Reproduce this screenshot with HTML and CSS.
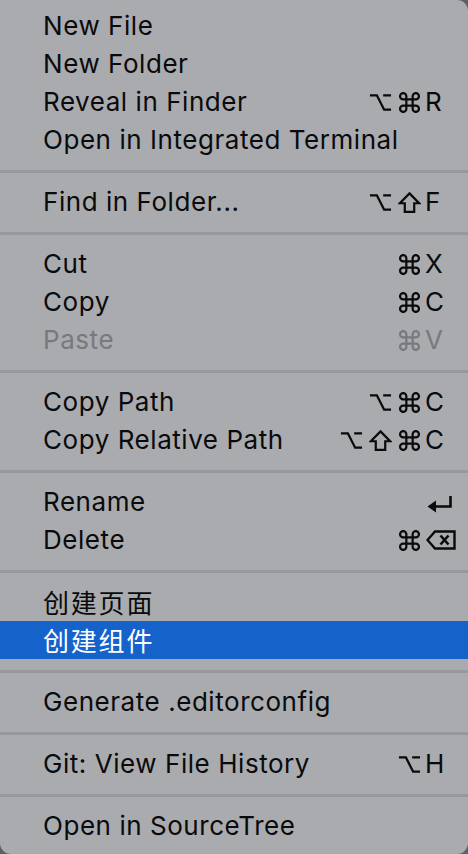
FILE: index.html
```html
<!DOCTYPE html>
<html lang="en">
<head>
<meta charset="utf-8">
<title>Context menu</title>
<link rel="stylesheet" href="styles.css">
</head>
<body>
<svg class="defs" width="0" height="0" aria-hidden="true">
  <defs>
    <symbol id="opt" viewBox="0 0 24 20"><path d="M1 2.5H8.2L15.8 17.5H23M14.8 2.5H23" fill="none" stroke="currentColor" stroke-width="2.4"/></symbol>
    <symbol id="cmd" viewBox="2 2 20 20"><path d="M15 6v12a3 3 0 1 0 3-3H6a3 3 0 1 0 3 3V6a3 3 0 1 0-3 3h12a3 3 0 1 0-3-3" fill="none" stroke="currentColor" stroke-width="2.1"/></symbol>
    <symbol id="shift" viewBox="1.5 1.5 21 20"><path d="M12 2.8L21.2 12.2H16.5V20.5H7.5V12.2H2.8Z" fill="none" stroke="currentColor" stroke-width="2.1" stroke-linejoin="miter"/></symbol>
    <symbol id="del" viewBox="0 0 30 20"><path d="M9 1.5H28.5V18.5H9L1.5 10Z" fill="none" stroke="currentColor" stroke-width="2.4"/><path d="M14.5 5.5L22.5 14.5M22.5 5.5L14.5 14.5" fill="none" stroke="currentColor" stroke-width="2.6"/></symbol>
    <symbol id="ret" viewBox="0 0 26 18"><path d="M23.5 1V11.5H8" fill="none" stroke="currentColor" stroke-width="2.6"/><path d="M0.5 11.5L9 5.5V17.5Z" fill="currentColor"/></symbol>
  </defs>
</svg>
<div class="menu">
  <div class="item"><span class="label">New File</span></div>
  <div class="item"><span class="label">New Folder</span></div>
  <div class="item"><span class="label">Reveal in Finder</span>
    <span class="keys"><svg class="mod"><use href="#opt"/></svg><svg class="mod"><use href="#cmd"/></svg><span class="key">R</span></span></div>
  <div class="item"><span class="label">Open in Integrated Terminal</span></div>

  <div class="sep"></div>

  <div class="item"><span class="label">Find in Folder...</span>
    <span class="keys"><svg class="mod"><use href="#opt"/></svg><svg class="mod"><use href="#shift"/></svg><span class="key">F</span></span></div>

  <div class="sep"></div>

  <div class="item"><span class="label">Cut</span>
    <span class="keys"><svg class="mod"><use href="#cmd"/></svg><span class="key">X</span></span></div>
  <div class="item"><span class="label">Copy</span>
    <span class="keys"><svg class="mod"><use href="#cmd"/></svg><span class="key">C</span></span></div>
  <div class="item disabled"><span class="label">Paste</span>
    <span class="keys"><svg class="mod"><use href="#cmd"/></svg><span class="key">V</span></span></div>

  <div class="sep"></div>

  <div class="item"><span class="label">Copy Path</span>
    <span class="keys"><svg class="mod"><use href="#opt"/></svg><svg class="mod"><use href="#cmd"/></svg><span class="key">C</span></span></div>
  <div class="item"><span class="label">Copy Relative Path</span>
    <span class="keys"><svg class="mod"><use href="#opt"/></svg><svg class="mod"><use href="#shift"/></svg><svg class="mod"><use href="#cmd"/></svg><span class="key">C</span></span></div>

  <div class="sep"></div>

  <div class="item"><span class="label">Rename</span>
    <span class="keys"><span class="key"><svg class="ret"><use href="#ret"/></svg></span></span></div>
  <div class="item"><span class="label">Delete</span>
    <span class="keys"><svg class="mod"><use href="#cmd"/></svg><span class="key"><svg class="del"><use href="#del"/></svg></span></span></div>

  <div class="sep"></div>

  <div class="item"><span class="label cjk">创建页面</span></div>
  <div class="item active"><span class="label cjk">创建组件</span></div>

  <div class="sep"></div>

  <div class="item"><span class="label">Generate .editorconfig</span></div>

  <div class="sep"></div>

  <div class="item"><span class="label">Git: View File History</span>
    <span class="keys"><svg class="mod"><use href="#opt"/></svg><span class="key">H</span></span></div>

  <div class="sep"></div>

  <div class="item"><span class="label">Open in SourceTree</span></div>
</div>
</body>
</html>
```
FILE: styles.css
```css
html, body {
  margin: 0;
  padding: 0;
}

body {
  width: 468px;
  height: 854px;
  background: #5d6064;
  overflow: hidden;
  font-family: Inter, "Noto Sans", "Noto Sans CJK SC", sans-serif;
}

.defs {
  position: absolute;
  width: 0;
  height: 0;
}

.menu {
  box-sizing: border-box;
  width: 468px;
  height: 854px;
  padding: 7px 0 9px;
  background: #a9abaf;
  border-radius: 0 11px 11px 11px;
  color: #0a0a0b;
  display: flex;
  flex-direction: column;
}

.item {
  height: 38px;
  flex: 0 0 38px;
  display: flex;
  align-items: center;
  padding: 0 25px 0 43px;
}

.label {
  flex: 1;
  font-size: 26px;
  letter-spacing: 0.55px;
  line-height: 38px;
  white-space: nowrap;
}

.label.cjk {
  font-family: "Noto Sans CJK SC", sans-serif;
  font-size: 26px;
  letter-spacing: 1.8px;
}

.keys {
  display: flex;
  align-items: center;
  gap: 6px;
}

.mod {
  width: 23px;
  height: 21px;
  color: inherit;
}

.key {
  width: 18px;
  margin-left: -2px;
  font-size: 26px;
  line-height: 38px;
  display: flex;
  align-items: center;
  overflow: visible;
}

.ret {
  flex: 0 0 26px;
  width: 26px;
  height: 18px;
  margin-left: 2px;
  margin-top: 4px;
}

.del {
  flex: 0 0 30px;
  width: 30px;
  height: 20px;
  margin-left: 1px;
}

.disabled {
  color: #77797d;
}

.active {
  background: #1562cb;
  color: #ffffff;
}

.sep {
  flex: 0 0 3px;
  height: 3px;
  margin: 11px 0 10px;
  background: #98999d;
}
```
